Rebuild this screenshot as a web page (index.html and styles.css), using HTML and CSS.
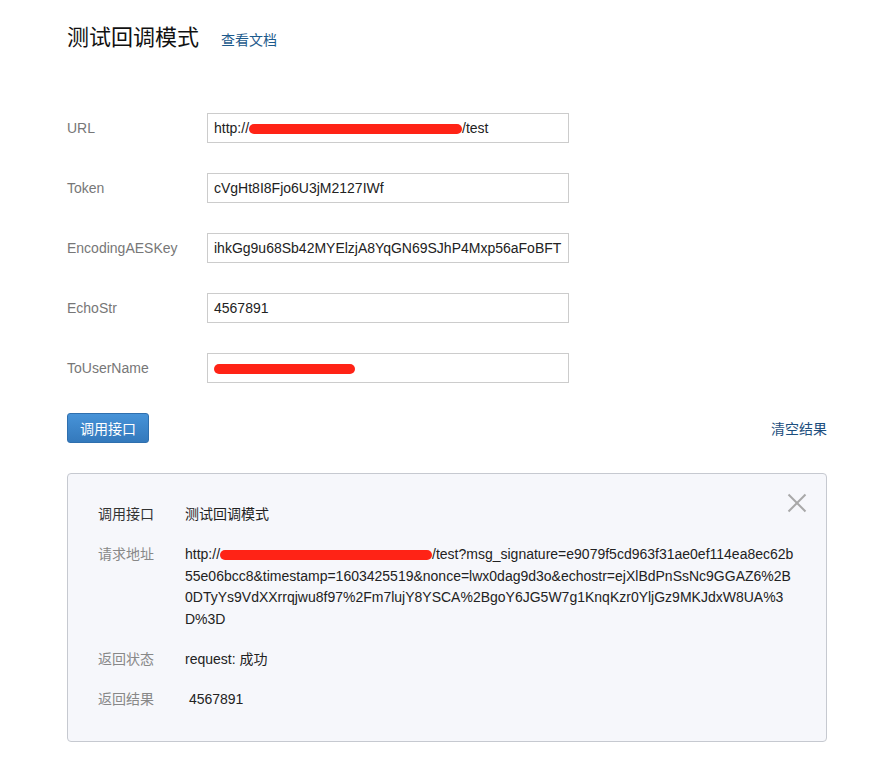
FILE: index.html
```html
<!DOCTYPE html>
<html lang="zh-CN">
<head>
<meta charset="UTF-8">
<title>测试回调模式</title>
<link rel="stylesheet" href="styles.css">
</head>
<body>

<div class="page">
  <div class="header">
    <h1>测试回调模式</h1>
    <a class="doc-link" href="#">查看文档</a>
  </div>

  <div class="form">
    <div class="row">
      <label>URL</label>
      <div class="field">http://<span class="mask" style="width:213px"></span>/test</div>
    </div>
    <div class="row">
      <label>Token</label>
      <div class="field">cVgHt8I8Fjo6U3jM2127IWf</div>
    </div>
    <div class="row">
      <label>EncodingAESKey</label>
      <div class="field">ihkGg9u68Sb42MYElzjA8YqGN69SJhP4Mxp56aFoBFT</div>
    </div>
    <div class="row">
      <label>EchoStr</label>
      <div class="field">4567891</div>
    </div>
    <div class="row">
      <label>ToUserName</label>
      <div class="field"><span class="mask" style="width:141px"></span></div>
    </div>
  </div>

  <div class="actions">
    <button class="btn-primary">调用接口</button>
    <a class="clear-link" href="#">清空结果</a>
  </div>

  <div class="result">
    <span class="close"></span>
    <div class="result-row">
      <div class="result-label dark">调用接口</div>
      <div class="result-value">测试回调模式</div>
    </div>
    <div class="result-row">
      <div class="result-label">请求地址</div>
      <div class="result-value url">http://<span class="mask" style="width:212px"></span>/test?msg_signature=e9079f5cd963f31ae0ef114ea8ec62b55e06bcc8&amp;timestamp=1603425519&amp;nonce=lwx0dag9d3o&amp;echostr=ejXlBdPnSsNc9GGAZ6%2B0DTyYs9VdXXrrqjwu8f97%2Fm7lujY8YSCA%2BgoY6JG5W7g1KnqKzr0YljGz9MKJdxW8UA%3D%3D</div>
    </div>
    <div class="result-row">
      <div class="result-label">返回状态</div>
      <div class="result-value">request: 成功</div>
    </div>
    <div class="result-row">
      <div class="result-label">返回结果</div>
      <div class="result-value">&nbsp;4567891</div>
    </div>
  </div>
</div>

</body>
</html>
```

FILE: styles.css
```css
body {
  margin: 0;
  font-family: "Liberation Sans", Arial, "Noto Sans CJK SC", sans-serif;
  font-size: 14px;
  color: #222;
  background: #fff;
}

.page {
  width: 760px;
  padding: 19px 0 0 67px;
}

.header {
  display: flex;
  align-items: baseline;
  height: 30px;
}

.header h1 {
  margin: 0;
  font-size: 22px;
  font-weight: normal;
  color: #111;
}

.doc-link {
  margin-left: 22px;
  color: #1d5a8c;
  text-decoration: none;
}

.form {
  margin-top: 64px;
}

.row {
  display: flex;
  align-items: center;
  margin-bottom: 30px;
}

.row label {
  width: 140px;
  color: #777;
}

.field {
  box-sizing: border-box;
  width: 362px;
  height: 30px;
  line-height: 28px;
  padding: 0 6px;
  border: 1px solid #ccc;
  white-space: nowrap;
  overflow: hidden;
}

.mask {
  display: inline-block;
  height: 10px;
  border-radius: 5px;
  background: #ff2316;
  vertical-align: middle;
}

.actions {
  display: flex;
  justify-content: space-between;
  align-items: center;
}

.btn-primary {
  width: 82px;
  height: 30px;
  padding: 0;
  font-family: inherit;
  font-size: 14px;
  color: #fff;
  background: linear-gradient(#4793d8, #3479bc);
  border: 1px solid #2f6fae;
  border-radius: 3px;
}

.clear-link {
  color: #1d4f7e;
  text-decoration: none;
}

.result {
  position: relative;
  box-sizing: border-box;
  margin-top: 30px;
  height: 269px;
  padding: 30px 30px 0;
  background: #f6f7fb;
  border: 1px solid #c6c9d0;
  border-radius: 4px;
}

.close {
  position: absolute;
  top: 20px;
  right: 20px;
  width: 18px;
  height: 18px;
}

.close::before,
.close::after {
  content: "";
  position: absolute;
  left: -3px;
  top: 8px;
  width: 24px;
  height: 2px;
  background: #a8a8a8;
  transform: rotate(45deg);
}

.close::after {
  transform: rotate(-45deg);
}

.result-row {
  display: flex;
  line-height: 21.5px;
  margin-bottom: 18.5px;
}

.result-label {
  width: 87px;
  flex: none;
  color: #888;
}

.result-label.dark {
  color: #333;
}

.result-value.url {
  width: 614px;
  word-break: break-all;
}
```
